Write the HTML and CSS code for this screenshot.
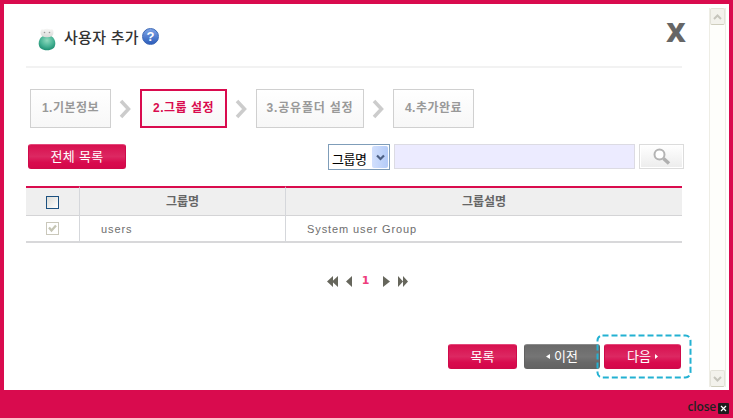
FILE: index.html
```html
<!DOCTYPE html>
<html lang="ko">
<head>
    <meta charset="UTF-8">
    <meta name="viewport" content="width=device-width, initial-scale=1.0">
    <title>사용자 추가</title>
    <link rel="stylesheet" href="styles.css">
</head>
<body>

<div class="dialog">
    <div class="content">
        <div class="header">
            <svg class="user-icon" width="18" height="24" viewBox="0 0 18 24">
                <defs>
                    <radialGradient id="body" cx="50%" cy="35%" r="65%">
                        <stop offset="0" stop-color="#8fd9bd"/>
                        <stop offset="0.6" stop-color="#48b395"/>
                        <stop offset="1" stop-color="#1f8f72"/>
                    </radialGradient>
                    <linearGradient id="head" x1="0" y1="0" x2="0" y2="1">
                        <stop offset="0" stop-color="#f6f6f5"/>
                        <stop offset="1" stop-color="#dadad8"/>
                    </linearGradient>
                </defs>
                <path d="M9 7C14 7 17.300 11 17.300 15.500S14 22.300 9 22.300S0.700 20 0.700 15.500S4 7 9 7z" fill="url(#body)"/>
                <path d="M2.500 4.500Q2.500 0 5.500 1.500Q9 0 12.500 1.500Q15.500 0 15.500 4.500Q15.500 9.300 9 9.300Q2.500 9.300 2.500 4.500z" fill="url(#head)"/>
                <circle cx="6.500" cy="4.500" r="0.8" fill="#999"/>
                <circle cx="11.500" cy="4.500" r="0.8" fill="#999"/>
            </svg>
            <h1>사용자 추가</h1>
            <span class="help">?</span>
            <button class="close-x">X</button>
        </div>

        <div class="steps">
            <div class="step s1">1.기본정보</div>
            <svg class="arrow" width="13" height="20" viewBox="0 0 13 20"><path d="M2 2l7.500 8L2 18" fill="none" stroke="#ccc" stroke-width="3.500"/></svg>
            <div class="step s2 active">2.그룹 설정</div>
            <svg class="arrow" width="13" height="20" viewBox="0 0 13 20"><path d="M2 2l7.500 8L2 18" fill="none" stroke="#ccc" stroke-width="3.500"/></svg>
            <div class="step s3">3.공유폴더 설정</div>
            <svg class="arrow" width="13" height="20" viewBox="0 0 13 20"><path d="M2 2l7.500 8L2 18" fill="none" stroke="#ccc" stroke-width="3.500"/></svg>
            <div class="step s4">4.추가완료</div>
        </div>

        <div class="toolbar">
            <button class="btn btn-all">전체 목록</button>
            <div class="select">
                <span>그룹명</span>
                <i><svg width="9" height="7" viewBox="0 0 9 7"><path d="M1 1.500l3.500 3.500L8 1.500" fill="none" stroke="#4d6185" stroke-width="2.200"/></svg></i>
            </div>
            <input type="text" class="keyword">
            <button class="search">
                <svg width="18" height="18" viewBox="0 0 18 18">
                    <circle cx="6.500" cy="6.500" r="5" fill="#fff" stroke="#b4b4b4" stroke-width="2"/>
                    <path d="M10.500 10.500l5.500 5" stroke="#b0b0b0" stroke-width="3.500"/>
                </svg>
            </button>
        </div>

        <table>
            <thead>
                <tr>
                    <th class="col-check"><span class="check"></span></th>
                    <th class="col-name">그룹명</th>
                    <th>그룹설명</th>
                </tr>
            </thead>
            <tbody>
                <tr>
                    <td class="col-check"><span class="check disabled"><svg width="9" height="9" viewBox="0 0 9 9"><path d="M1 3.500l2.500 3L8 1.500" fill="none" stroke="#c5c5b4" stroke-width="2.300"/></svg></span></td>
                    <td>users</td>
                    <td>System user Group</td>
                </tr>
            </tbody>
        </table>

        <div class="paging">
            <svg width="11" height="11" viewBox="0 0 11 11"><path d="M6 0v11L0 5.500zM11 0v11L5 5.500z"/></svg>
            <svg class="prev" width="6" height="11" viewBox="0 0 6 11"><path d="M6 0v11L0 5.500z"/></svg>
            <span>1</span>
            <svg class="next" width="7" height="11" viewBox="0 0 7 11"><path d="M0 0v11l7-5.500z"/></svg>
            <svg width="10" height="11" viewBox="0 0 10 11"><path d="M0 0v11l5-5.500zM5 0v11l5-5.500z"/></svg>
        </div>

        <div class="buttons">
            <button class="btn btn-list">목록</button>
            <button class="btn btn-prev"><svg width="4" height="5" viewBox="0 0 4 5"><path d="M4 0v5L0 2.500z"/></svg>이전</button>
            <div class="next-wrap">
                <button class="btn btn-next">다음<svg width="3" height="5" viewBox="0 0 3 5"><path d="M0 0v5l3-2.500z"/></svg></button>
                <svg class="highlight" width="96" height="45" viewBox="0 0 96 45"><rect x="1.500" y="1.500" width="93" height="42" rx="5"/></svg>
            </div>
        </div>
    </div>

    <div class="scrollbar">
        <span><svg width="9" height="6" viewBox="0 0 9 6"><path d="M1 5l3.500-3.500L8 5" fill="none" stroke="#c6c5bc" stroke-width="2"/></svg></span>
        <span><svg width="9" height="6" viewBox="0 0 9 6"><path d="M1 1l3.500 3.500L8 1" fill="none" stroke="#c6c5bc" stroke-width="2"/></svg></span>
    </div>
</div>

<div class="footer">
    <span>close</span>
    <svg width="11" height="11" viewBox="0 0 11 11"><rect width="11" height="11" rx="1" fill="#1c1c1c"/><path d="M3 3l5 5M8 3l-5 5" stroke="#fff" stroke-width="1.200"/></svg>
</div>

</body>
</html>
```
FILE: styles.css
```css
* {
    box-sizing: border-box;
}
body {
    margin: 0;
    height: 418px;
    padding: 4px 4px 0;
    overflow: hidden;
    background-color: #d90b4e;
    font-family: "Liberation Sans", "Noto Sans CJK KR", sans-serif;
    font-size: 12px;
    color: #666;
}
svg {
    display: block;
    flex: none;
}
button {
    padding: 0;
    border: none;
    font-family: inherit;
}
.dialog {
    display: flex;
    justify-content: space-between;
    height: 386px;
    background: #fff;
}
.content {
    width: 680px;
    padding-left: 22px;
}

.header {
    display: flex;
    width: 656px;
    height: 64px;
    padding: 24px 0 0 12px;
    border-bottom: 2px solid #f2f2f2;
    margin-right: 2px;
}
.user-icon {
    margin: 0 8px 0 0;
}
h1 {
    width: 77px;
    margin: 0;
    font-size: 15px;
    font-weight: 500;
    line-height: 20px;
    letter-spacing: 0.3px;
    white-space: nowrap;
    color: #333;
}
.help {
    width: 17px;
    height: 17px;
    margin-left: 1px;
    border: 1px solid #3c67b5;
    border-radius: 50%;
    background: linear-gradient(#7ea4e6, #2d5dbb);
    color: #fff;
    font-size: 13px;
    font-weight: bold;
    line-height: 15px;
    text-align: center;
}
.close-x {
    width: 22px;
    height: 24px;
    margin: -8px -5px 0 auto;
    background: none;
    font-family: "Open Sans", sans-serif;
    font-size: 27px;
    font-weight: 800;
    line-height: 24px;
    color: #666;
}

.steps {
    display: flex;
    align-items: center;
    padding: 21px 0 0 4px;
}
.step {
    height: 39px;
    border: 1px solid #d0d0d0;
    background: linear-gradient(#fff, #f7f7f7);
    font-size: 12px;
    font-weight: bold;
    line-height: 36px;
    letter-spacing: 0.5px;
    text-align: center;
    white-space: nowrap;
    color: #999;
}
.s1, .s4 {
    width: 81px;
}
.s2 {
    width: 87px;
}
.s3 {
    width: 108px;
    letter-spacing: 0.8px;
}
.step.active {
    border: 2px solid #d90b4e;
    line-height: 34px;
    color: #d90b4e;
}
.arrow {
    margin: 0 8px;
}

.toolbar {
    display: flex;
    width: 658px;
    padding: 16px 0 0 2px;
}
.btn {
    display: flex;
    align-items: center;
    justify-content: center;
    height: 25px;
    border: 1px solid #cf0a4a;
    border-top-color: #e4487a;
    border-radius: 3px;
    background: linear-gradient(#d8104f, #dc2862 50%, #d90b4e 75%, #d4074a);
    color: #fff;
    font-size: 13px;
    line-height: 20px;
}
.btn svg {
    fill: #fff;
}
.btn-all {
    width: 98px;
    letter-spacing: 0.3px;
}
.select {
    display: flex;
    justify-content: space-between;
    width: 62px;
    height: 26px;
    margin-left: 202px;
    padding: 1px;
    border: 1px solid #7f9db9;
    background: #fff;
    color: #000;
    font-size: 13px;
    line-height: 28px;
    white-space: nowrap;
}
.select span {
    padding-left: 2px;
    letter-spacing: -0.4px;
}
.select i {
    display: flex;
    align-items: center;
    justify-content: center;
    width: 16px;
    height: 22px;
    border-radius: 2px;
    background: linear-gradient(90deg, #d2e0fd, #b4cbf8);
}
.keyword {
    width: 241px;
    height: 25px;
    margin: 0 4px;
    border: 1px solid #dcdbe3;
    background: #ecebff;
}
.search {
    display: flex;
    align-items: center;
    justify-content: center;
    width: 45px;
    height: 25px;
    border: 1px solid #dcdcdc;
    box-shadow: inset 0 0 0 1px #fff;
    background: linear-gradient(#fff, #ececec);
}

table {
    width: 656px;
    margin-top: 16px;
    border-collapse: separate;
    border-spacing: 0;
    table-layout: fixed;
}
th {
    height: 30px;
    padding: 0;
    border-top: 2px solid #d90b4e;
    border-bottom: 1px solid #d4d4d6;
    background: #efefef;
    font-size: 12px;
    line-height: 18px;
    color: #666;
}
td {
    height: 27px;
    padding: 0 0 0 21px;
    border-bottom: 2px solid #d8d8da;
    font-size: 11px;
    line-height: 14px;
    letter-spacing: 0.9px;
    color: #6e6e6e;
}
th + th, td + td {
    border-left: 1px solid #d5d7db;
}
.col-check {
    width: 53px;
    padding: 0;
}
.col-name {
    width: 206px;
}
.check {
    display: block;
    width: 13px;
    height: 13px;
    margin: 1px auto 0;
    border: 1px solid #1c5180;
    background: linear-gradient(135deg, #dcdcd7, #fff);
}
.check.disabled {
    margin-top: 0;
    padding: 1px;
    border-color: #cac8bb;
    background: #fff;
}

.paging {
    display: flex;
    align-items: center;
    height: 13px;
    margin: 31px 0 0 301px;
}
.paging svg {
    fill: #66665c;
    margin-top: 2px;
}
.paging .prev {
    margin-left: 8px;
}
.paging .next {
    margin-right: 8px;
}
.paging span {
    width: 31px;
    padding-right: 4px;
    font-family: "DejaVu Sans", sans-serif;
    font-size: 11px;
    font-weight: bold;
    line-height: 11px;
    text-align: center;
    color: #ee3d7c;
}

.buttons {
    display: flex;
    margin: 57px 0 0 422px;
}
.btn-list {
    width: 69px;
    margin-right: 7px;
}
.btn-prev {
    width: 76px;
    margin-right: 4px;
    gap: 4px;
    border-color: #626262;
    border-top-color: #8b8b8b;
    background: linear-gradient(#6a6a6a, #757575 50%, #686868 75%, #636363);
}
.btn-next {
    width: 77px;
    gap: 4px;
}
.next-wrap {
    position: relative;
}
.highlight {
    position: absolute;
    left: -8px;
    top: -10px;
    fill: none;
    stroke: #23b1d2;
    stroke-width: 2;
    stroke-dasharray: 6 3;
}

.scrollbar {
    display: flex;
    flex-direction: column;
    justify-content: space-between;
    width: 17px;
    height: 379px;
    margin: 4px 3px 0 0;
    border: solid #eeede5;
    border-width: 0 1px;
    background: #fefefb;
}
.scrollbar span {
    display: flex;
    align-items: center;
    justify-content: center;
    height: 17px;
    border: 1px solid #e3e2d9;
    border-bottom-color: #cfcebd;
    border-radius: 2px;
    background: #f3f2ec;
}

.footer {
    display: flex;
    justify-content: flex-end;
    align-items: center;
    height: 24px;
    padding-top: 10px;
}
.footer span {
    margin-right: 2px;
    font-family: "Open Sans", sans-serif;
    font-size: 12px;
    font-weight: 600;
    line-height: 12px;
    letter-spacing: -0.2px;
    color: #222;
}
.footer svg {
    margin-top: 2px;
}
```
